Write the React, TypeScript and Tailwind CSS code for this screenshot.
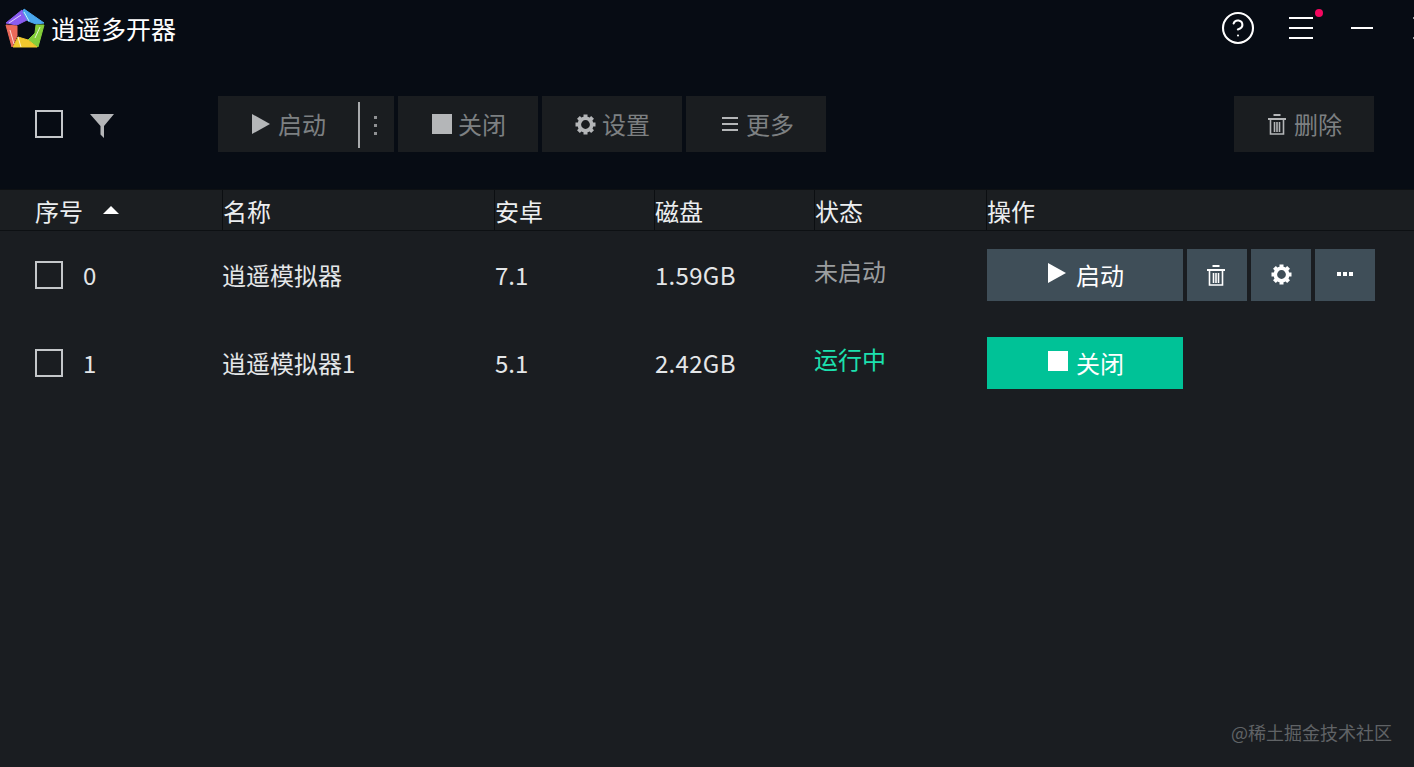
import { CircleHelp } from "lucide-react";

function Logo() {
  return (
    <svg width="44" height="44" viewBox="0 0 44 44" className="ml-[3px] mt-[7px] shrink-0">
      <g transform="translate(-3 -7)" strokeWidth="1" strokeLinejoin="round">
        <polygon points="6,23 22,10 27,20 17,25" fill="#8a5cf0" stroke="#8a5cf0" />
        <polygon points="24,9 44,23 36,24 28,21 23,12" fill="#4aa8ee" stroke="#4aa8ee" />
        <polygon points="44,25 38,47 28,40 35,33 36,25" fill="#84cf3a" stroke="#84cf3a" />
        <polygon points="37,47 13,47 18,37 28,40" fill="#f2c92e" stroke="#f2c92e" />
        <polygon points="12,47 6,25 17,26 17,36" fill="#ec6a5a" stroke="#ec6a5a" />
        <path d="M9 23 L21 15 M21 47 L18 37 M10 30 L14 44 M24 12 L29 21 M40 27 L35 38" stroke="#fff" fill="none" opacity="0.75" />
      </g>
    </svg>
  );
}

function Play({ className }: any) {
  return (
    <svg width="18" height="20" viewBox="0 0 18 20" className={className}>
      <polygon points="0,0 18,10 0,20" fill="currentColor" />
    </svg>
  );
}

function Trash({ className }: any) {
  return (
    <svg width="18" height="21" viewBox="0 0 18 21" className={className}>
      <path d="M5.500 1h7M0 5h18" stroke="currentColor" strokeWidth="2" />
      <path d="M2.500 5v15h13V5M6.500 8v10M9 8v10M11.500 8v10" stroke="currentColor" strokeWidth="1.600" fill="none" />
    </svg>
  );
}

function Gear({ className }: any) {
  const teeth = [0, 45, 90, 135, 180, 225, 270, 315];
  return (
    <svg width="21" height="21" viewBox="0 0 21 21" className={className}>
      <circle cx="10.500" cy="10.500" r="6.200" fill="none" stroke="currentColor" strokeWidth="3.600" />
      {teeth.map((deg) => (
        <rect key={deg} x="8.500" y="0.500" width="4" height="4" fill="currentColor" transform={`rotate(${deg} 10.500 10.500)`} />
      ))}
    </svg>
  );
}

function ToolButton({ icon, label, className }: any) {
  return (
    <div className={`w-[140px] h-14 flex items-center justify-center bg-[#1a1d20] text-[#7d8082] text-2xl ${className}`}>
      <span className="text-[#b4b6b8] flex items-center">{icon}</span>
      <span>{label}</span>
    </div>
  );
}

function Checkbox() {
  return <div className="w-7 h-7 border-2 border-[#c4c7ca] shrink-0" />;
}

function HeaderCell({ label, width }: any) {
  return (
    <div className={`${width} h-full border-l border-[#0b0e11] flex items-center pt-px`}>{label}</div>
  );
}

const cols = ["w-[272px]", "w-[160px]", "w-[160px]", "w-[172px]"];

function Row({ index, name, android, disk, running }: any) {
  return (
    <div className="h-[88px] pt-[18px] flex text-2xl text-[#e4e6e8]">
      <div className="w-[222px] pl-[35px] h-[52px] flex items-center gap-5 shrink-0">
        <Checkbox />
        <span>{index}</span>
      </div>
      <div className={`${cols[0]} h-[52px] flex items-center`}>{name}</div>
      <div className={`${cols[1]} h-[52px] flex items-center pl-px`}>{android}</div>
      <div className={`${cols[2]} h-[52px] flex items-center pl-px tracking-[0.3px]`}>{disk}</div>
      <div className={`${cols[3]} h-11 flex items-center ${running ? "text-[#1ce0ae]" : "text-[#9b9d9f]"}`}>
        {running ? "运行中" : "未启动"}
      </div>
      <div className="flex gap-1 pl-px">
        {running ? (
          <div className="w-[196px] h-[52px] pl-[2px] bg-[#00c297] text-white flex items-center justify-center gap-2">
            <div className="w-5 h-5 bg-white mb-1" />
            <span>关闭</span>
          </div>
        ) : (
          <>
            <div className="w-[196px] h-[52px] pl-[2px] bg-[#3f4e58] text-white flex items-center justify-center gap-[10px]">
              <Play className="mb-1" />
              <span>启动</span>
            </div>
            <div className="w-[60px] h-[52px] pr-[2px] bg-[#3f4e58] text-white flex items-center justify-center">
              <Trash />
            </div>
            <div className="w-[60px] h-[52px] bg-[#3f4e58] text-white flex items-center justify-center">
              <Gear className="mb-px" />
            </div>
            <div className="w-[60px] h-[52px] bg-[#3f4e58] text-white flex items-center justify-center gap-[2px] pb-[3px]">
              <div className="w-[4px] h-[4px] bg-white" />
              <div className="w-[4px] h-[4px] bg-white" />
              <div className="w-[4px] h-[4px] bg-white" />
            </div>
          </>
        )}
      </div>
    </div>
  );
}

export default function App() {
  return (
    <div className="relative w-[1414px] h-[767px] overflow-hidden bg-[#1a1d21] font-['Noto_Sans_CJK_SC','Noto_Sans',sans-serif]">
      {/* TITLE BAR + TOOLBAR */}
      <div className="h-[189px] bg-[#070c14]">
        <div className="h-[60px] flex">
          <Logo />
          <div className="ml-[4px] mt-2 h-10 text-[25px] leading-10 text-white">逍遥多开器</div>
          <div className="ml-auto flex items-start text-white">
            <CircleHelp size={36} strokeWidth={1.4} className="mt-[10px]" />
            <div className="relative ml-[33px] mt-[17px] w-6 h-[22px] flex flex-col justify-between">
              <div className="h-[2px] bg-white" />
              <div className="h-[2px] bg-white" />
              <div className="h-[2px] bg-white" />
              <div className="absolute -top-[8px] left-[26px] w-2 h-2 rounded-full bg-[#f5075f]" />
            </div>
            <div className="ml-[38px] mt-[27px] w-[22px] h-[2px] bg-white" />
            <div className="ml-[40px] mt-[17px] w-px h-[22px] border-t-2 border-b-2 border-[#9a9c9e]" />
          </div>
        </div>
        <div className="h-14 mt-9 flex items-center">
          <div className="ml-[35px]">
            <Checkbox />
          </div>
          <svg width="24" height="24" viewBox="0 0 24 24" className="ml-[27px] mt-1 text-[#b4b6b8]">
            <polygon points="0,0 24,0 14,12 14,24 10.500,20.500 10.500,12" fill="currentColor" />
          </svg>
          <div className="ml-[104px] w-[176px] h-14 flex items-center bg-[#1a1d20] text-[#7d8082] text-2xl">
            <Play className="ml-[34px] text-[#b4b6b8]" />
            <span className="ml-2">启动</span>
            <div className="ml-8 mt-[2px] w-[2px] h-[46px] bg-[#a9abad]" />
            <div className="ml-[14px] mt-[2px] flex flex-col gap-[5px]">
              <div className="w-[3px] h-[3px] bg-[#8f9193]" />
              <div className="w-[3px] h-[3px] bg-[#8f9193]" />
              <div className="w-[3px] h-[3px] bg-[#8f9193]" />
            </div>
          </div>
          <div className="ml-1 flex gap-1">
            <ToolButton className="gap-[6px] pl-[2px]" label="关闭" icon={<div className="w-5 h-5 bg-[#b4b6b8]" />} />
            <ToolButton className="gap-[6px] pl-px" label="设置" icon={<Gear />} />
            <ToolButton
              className="gap-2 pl-1"
              label="更多"
              icon={
                <div className="w-4 h-[14px] flex flex-col justify-between">
                  <div className="h-[2px] bg-[#b4b6b8]" />
                  <div className="h-[2px] bg-[#b4b6b8]" />
                  <div className="h-[2px] bg-[#b4b6b8]" />
                </div>
              }
            />
          </div>
          <div className="ml-auto mr-10">
            <ToolButton className="gap-2 pl-[2px]" label="删除" icon={<Trash />} />
          </div>
        </div>
      </div>

      {/* TABLE HEADER */}
      <div className="h-[42px] flex items-center bg-[#1b1e21] border-t border-b border-[#0d1013] text-2xl text-[#eceef0]">
        <div className="w-[222px] pl-[35px] pt-px h-full flex items-center shrink-0">
          <span>序号</span>
          <svg width="16" height="8" viewBox="0 0 16 8" className="ml-[20px] mb-[2px]">
            <polygon points="8,0 16,8 0,8" fill="#fff" />
          </svg>
        </div>
        <HeaderCell label="名称" width={cols[0]} />
        <HeaderCell label="安卓" width={cols[1]} />
        <HeaderCell label="磁盘" width={cols[2]} />
        <HeaderCell label="状态" width={cols[3]} />
        <HeaderCell label="操作" width="flex-1" />
      </div>

      {/* ROWS */}
      <Row index="0" name="逍遥模拟器" android="7.1" disk="1.59GB" />
      <Row index="1" name="逍遥模拟器1" android="5.1" disk="2.42GB" running />

      <div className="absolute left-[1231px] top-[719px] text-lg text-[#606366] leading-[26px] whitespace-nowrap">
        @稀土掘金技术社区
      </div>
    </div>
  );
}
